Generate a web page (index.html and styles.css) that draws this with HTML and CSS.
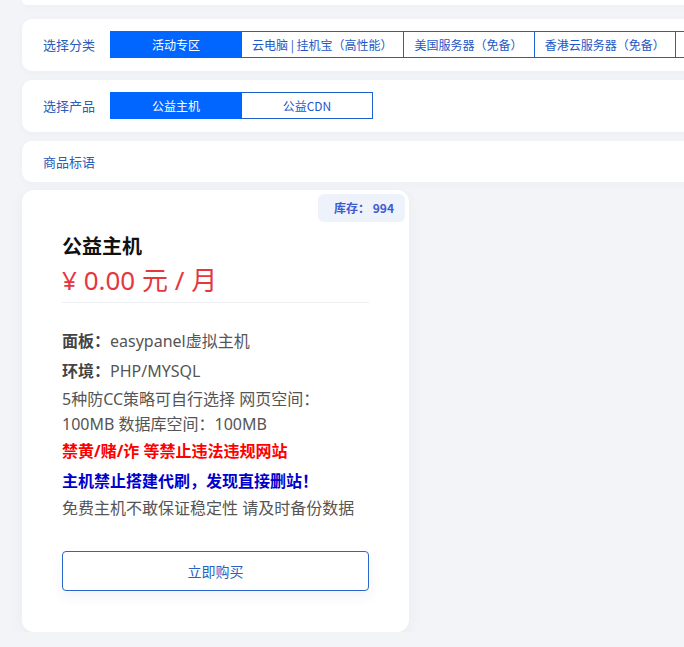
FILE: index.html
```html
<!DOCTYPE html>
<html lang="zh-CN">
<head>
<meta charset="utf-8">
<title>公益主机</title>
<link rel="stylesheet" href="styles.css">
</head>
<body>
<div class="page">
  <div class="card card-top"></div>

  <div class="card filter">
    <span class="filter-label">选择分类</span>
    <div class="tabs">
      <span class="tab active">活动专区</span>
      <span class="tab">云电脑 | 挂机宝（高性能）</span>
      <span class="tab">美国服务器（免备）</span>
      <span class="tab">香港云服务器（免备）</span>
      <span class="tab">国内服务器</span>
    </div>
  </div>

  <div class="card filter">
    <span class="filter-label">选择产品</span>
    <div class="tabs">
      <span class="tab active">公益主机</span>
      <span class="tab">公益CDN</span>
    </div>
  </div>

  <div class="card filter filter-slogan">
    <span class="filter-label">商品标语</span>
  </div>

  <div class="product">
    <span class="stock">库存： 994</span>
    <h2 class="product-title">公益主机</h2>
    <div class="price">¥ 0.00 元 / 月</div>
    <div class="specs">
      <div class="spec"><b>面板：</b>easypanel虚拟主机</div>
      <div class="spec"><b>环境：</b>PHP/MYSQL</div>
      <div class="desc">5种防CC策略可自行选择 网页空间：<br>100MB 数据库空间：100MB</div>
      <div class="warn-red">禁黄/赌/诈 等禁止违法违规网站</div>
      <div class="warn-blue">主机禁止搭建代刷，发现直接删站！</div>
      <div class="note">免费主机不敢保证稳定性 请及时备份数据</div>
    </div>
    <button class="buy">立即购买</button>
  </div>
</div>
</body>
</html>
```

FILE: styles.css
```css
html, body {
  margin: 0;
  padding: 0;
  background: #f3f4f8;
  overflow: hidden;
}
body {
  font-family: "Noto Sans", "Noto Sans CJK SC", sans-serif;
  color: #555;
}
.page {
  padding-left: 22px;
  width: 1000px;
  display: flex;
  flex-direction: column;
  align-items: flex-start;
}
.card {
  background: #fff;
  border-radius: 10px;
  box-shadow: 0 2px 8px rgba(30, 50, 100, 0.03);
  width: 900px;
  box-sizing: border-box;
}
.card-top {
  height: 5px;
  border-radius: 0 0 5px 5px;
  margin-bottom: 14px;
}
.filter {
  display: flex;
  align-items: center;
  height: 52px;
  padding-left: 21px;
  margin-bottom: 9px;
}
.filter-slogan {
  height: 41px;
  margin-bottom: 8px;
}
.filter-label {
  font-family: "Noto Sans CJK SC", sans-serif;
  font-size: 13px;
  line-height: 20px;
  color: #2c5bb8;
  width: 67px;
  flex: none;
}
.tabs {
  display: flex;
  margin-top: -1px;
}
.tab {
  box-sizing: border-box;
  min-width: 132px;
  height: 27px;
  padding: 0 10px;
  border: 1px solid #1f60cf;
  margin-right: -1px;
  font-family: "Noto Sans CJK SC", sans-serif;
  font-size: 12px;
  line-height: 25px;
  color: #1d58c6;
  text-align: center;
  white-space: nowrap;
  background: #fff;
}
.tab.active {
  background: #0066ff;
  border-color: #0066ff;
  color: #fff;
}
.product {
  position: relative;
  width: 387px;
  box-sizing: border-box;
  background: #fff;
  border-radius: 12px;
  box-shadow: 0 4px 14px rgba(30, 50, 100, 0.05);
  padding: 42px 40px 41px;
}
.stock {
  position: absolute;
  top: 4px;
  right: 4px;
  height: 28px;
  line-height: 28px;
  padding: 0 11px 0 16px;
  background: #eef2fb;
  border-radius: 6px;
  font-family: "Noto Sans CJK SC", sans-serif;
  font-size: 12px;
  font-weight: bold;
  color: #3c5ccf;
}
.product-title {
  margin: 0;
  font-family: "Noto Sans CJK SC", sans-serif;
  font-size: 20px;
  line-height: 28px;
  font-weight: bold;
  color: #111;
}
.price {
  margin-top: 2px;
  font-size: 26px;
  line-height: 36px;
  color: #e5383e;
  padding-bottom: 4px;
  border-bottom: 1px solid #eceef2;
}
.specs {
  margin-top: 23px;
  font-size: 16px;
  font-family: "Noto Sans", "Noto Sans CJK SC", sans-serif;
  color: #555;
}
.specs > div {
  overflow: hidden;
}
.spec {
  height: 30px;
  line-height: 30px;
}
.spec + .spec {
  height: 31px;
  line-height: 31px;
}
.spec b {
  color: #444;
  font-family: "Noto Sans CJK SC", sans-serif;
  line-height: 1;
}
.desc {
  height: 50px;
  line-height: 25px;
}
.warn-red {
  margin-top: 1px;
  height: 26px;
  line-height: 26px;
  font-weight: bold;
  color: #f00;
}
.warn-blue {
  margin-top: 4px;
  height: 26px;
  line-height: 26px;
  font-weight: bold;
  color: #0000cc;
}
.note {
  height: 28px;
  line-height: 28px;
}
.buy {
  display: block;
  width: 100%;
  height: 40px;
  margin-top: 29px;
  background: #fff;
  border: 1px solid #2a66cc;
  border-radius: 4px;
  font-family: "Noto Sans CJK SC", sans-serif;
  font-size: 14px;
  color: #2a5fc6;
  box-shadow: 0 6px 14px rgba(30, 50, 100, 0.06);
  cursor: pointer;
}
```
